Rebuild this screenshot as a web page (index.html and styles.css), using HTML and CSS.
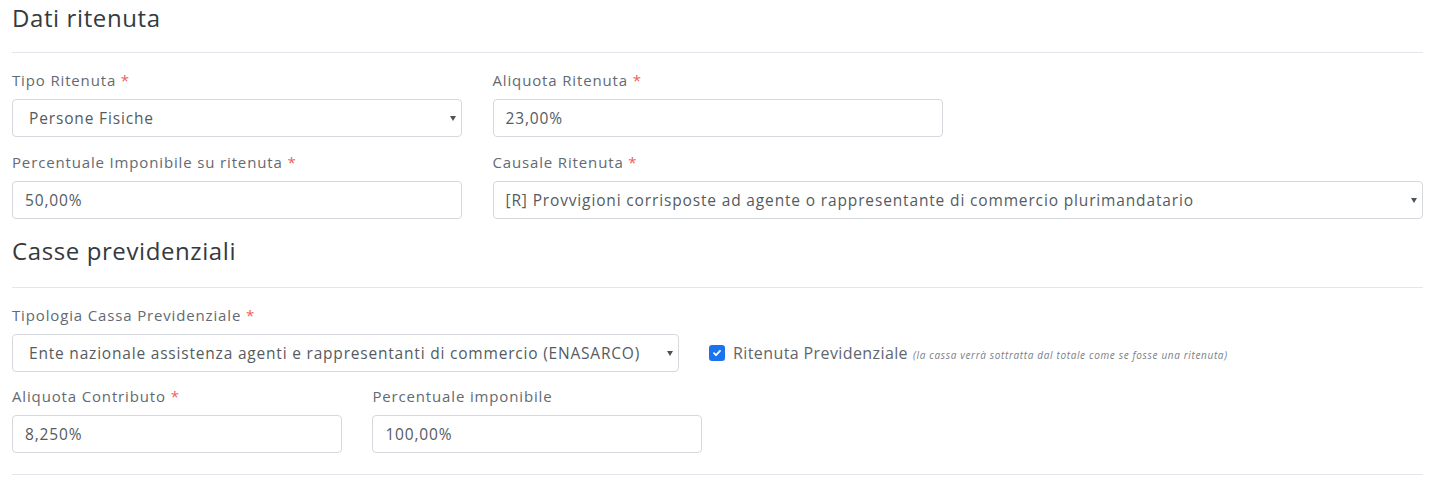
FILE: index.html
```html
<!DOCTYPE html>
<html>
  <head>
    <meta charset="utf-8">
    <title>Dati ritenuta</title>
    <link rel="stylesheet" href="styles.css">
  </head>
  <body>
    <div class="container">
      <h2 class="section-title">Dati ritenuta</h2>
      <div class="grid three">
        <div class="field">
          <label>Tipo Ritenuta <span class="req">*</span></label>
          <div class="select select-indent">Persone Fisiche<span class="caret"></span></div>
        </div>
        <div class="field">
          <label>Aliquota Ritenuta <span class="req">*</span></label>
          <div class="input">23,00%</div>
        </div>
        <div></div>
        <div class="field">
          <label>Percentuale Imponibile su ritenuta <span class="req">*</span></label>
          <div class="input">50,00%</div>
        </div>
        <div class="field span2">
          <label>Causale Ritenuta <span class="req">*</span></label>
          <div class="select">[R] Provvigioni corrisposte ad agente o rappresentante di commercio plurimandatario<span class="caret"></span></div>
        </div>
      </div>

      <h2 class="section-title second">Casse previdenziali</h2>
      <div class="cassa-row">
        <div class="field">
          <label>Tipologia Cassa Previdenziale <span class="req">*</span></label>
          <div class="select select-indent cassa-select">Ente nazionale assistenza agenti e rappresentanti di commercio (ENASARCO)<span class="caret"></span></div>
        </div>
        <div class="check">
          <span class="box">
            <svg width="10" height="10" viewBox="0 0 10 10"><path d="M2 5.2l2 2 4-4.4" fill="none" stroke="#fff" stroke-width="1.8" stroke-linecap="round" stroke-linejoin="round"/></svg>
          </span>
          <span class="check-label">Ritenuta Previdenziale</span>
          <span class="note">(la cassa verrà sottratta dal totale come se fosse una ritenuta)</span>
        </div>
      </div>
      <div class="grid four">
        <div class="field">
          <label>Aliquota Contributo <span class="req">*</span></label>
          <div class="input">8,250%</div>
        </div>
        <div class="field">
          <label>Percentuale imponibile</label>
          <div class="input">100,00%</div>
        </div>
      </div>
      <hr class="rule">
    </div>
  </body>
</html>
```

FILE: styles.css
```css
body {
  margin: 0;
  font-family: "Open Sans", "DejaVu Sans", sans-serif;
  color: #5b626b;
  background: #fff;
}

.container {
  width: 1411px;
  padding: 0 0 0 12px;
}

.section-title {
  margin: 0;
  padding: 3px 0 20px;
  font-size: 24px;
  font-weight: 400;
  line-height: 29px;
  letter-spacing: 0.6px;
  color: #343a40;
  border-bottom: 1px solid #e3e6ea;
}

.section-title.second {
  padding-bottom: 22px;
}

.grid {
  display: grid;
  column-gap: 30.5px;
  margin-top: 16px;
}

.grid.three {
  grid-template-columns: repeat(3, 1fr);
}

.grid.four {
  grid-template-columns: repeat(4, 1fr);
  margin-top: 13px;
}

.field {
  margin-bottom: 14px;
}

.field label {
  display: block;
  font-size: 15px;
  line-height: 22px;
  letter-spacing: 0.85px;
  margin-bottom: 8px;
  color: #636a72;
}

.req {
  color: #f0605a;
}

.span2 {
  grid-column: span 2;
}

.input,
.select {
  box-sizing: border-box;
  height: 38px;
  border: 1px solid #d5d9de;
  border-radius: 4px;
  padding: 0 12px;
  font-size: 15.5px;
  line-height: 36px;
  letter-spacing: 0.85px;
  color: #555b62;
  white-space: nowrap;
  position: relative;
}

.select-indent {
  padding-left: 16px;
}

.caret {
  position: absolute;
  right: 5px;
  top: 16px;
  border-left: 3px solid transparent;
  border-right: 3px solid transparent;
  border-top: 5px solid #4c535a;
}

.cassa-row {
  display: flex;
  align-items: flex-end;
  margin-top: 16px;
}

.cassa-row .field {
  margin-bottom: 0;
}

.cassa-select {
  width: 667px;
  letter-spacing: 0.8px;
}

.check {
  display: flex;
  align-items: center;
  margin-left: 30px;
  height: 38px;
}

.box {
  width: 16px;
  height: 16px;
  border-radius: 3px;
  background: #1a73f0;
  display: flex;
  align-items: center;
  justify-content: center;
  margin-right: 8px;
}

.check-label {
  font-size: 16px;
  letter-spacing: 0.4px;
  color: #5f666d;
}

.note {
  font-size: 10px;
  font-style: italic;
  letter-spacing: 0.65px;
  color: #7a8088;
  margin-left: 5px;
  padding-top: 3px;
}

.rule {
  border: 0;
  border-top: 1px solid #e3e6ea;
  margin: 7px 0 0;
}
```
